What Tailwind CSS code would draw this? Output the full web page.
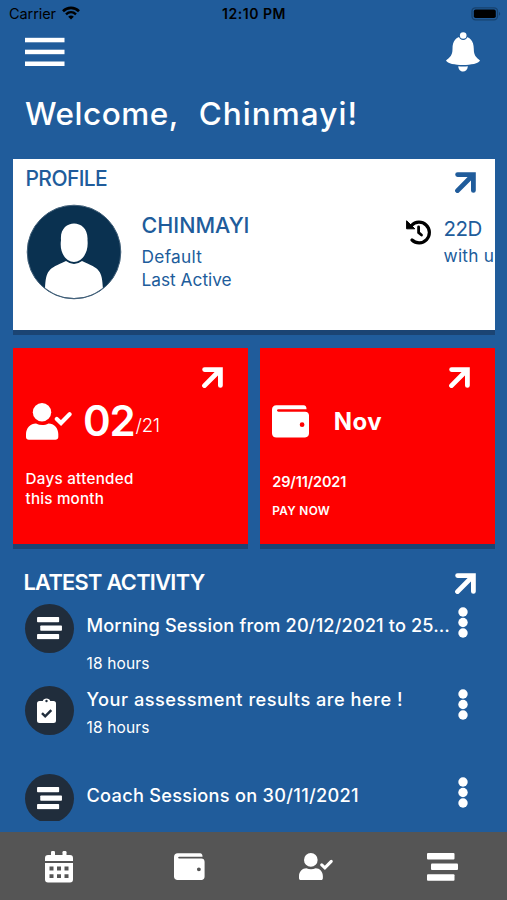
<!DOCTYPE html>
<html lang="en">
<head>
<meta charset="utf-8">
<title>Home</title>
<script src="https://cdn.jsdelivr.net/npm/@tailwindcss/browser@4"></script>
</head>
<body class="bg-[#205c9b]">
<svg class="hidden">
  <symbol id="arrow" viewBox="0 0 21 21"><path d="M2.6 2.6H18.4V18.4M18 3L2.5 18.6" fill="none" stroke="currentColor" stroke-width="4.8" stroke-linecap="round" stroke-linejoin="miter"/></symbol>
  <symbol id="usercheck" viewBox="0 0 46 37"><circle cx="16" cy="9.2" r="9.2" fill="currentColor"/><path d="M0 31C0 25 4.5 20.4 10 20.4C14 22.4 18.500 22.400 22.500 20.400C28 20.400 32.300 25 32.300 31V34C32.300 35.700 31 36.800 29.500 36.800H2.800C1.200 36.800 0 35.700 0 34Z" fill="currentColor"/><path d="M30.800 16L35 20L43.600 11.200" fill="none" stroke="currentColor" stroke-width="4.100" stroke-linecap="round"/></symbol>
  <symbol id="wallet" viewBox="0 0 38 33"><path fill-rule="evenodd" fill="currentColor" d="M4.500 0H32C34 0 35 1.500 35 4.200H6.500C4.600 4.200 4.600 6.500 6.500 6.500H33.500C36 6.500 37.500 8 37.500 10.500V28.500C37.500 31 36 32.700 33.500 32.700H4.500C1.700 32.700 0 31 0 28.300V4.500C0 1.700 1.700 0 4.500 0ZM30.500 17.300A2.400 2.400 0 1 0 30.500 22.100A2.400 2.400 0 1 0 30.500 17.300Z"/></symbol>
  <symbol id="stream" viewBox="0 0 31 28"><g fill="currentColor"><rect width="27.500" height="6.500" rx="1"/><rect x="4" y="10.600" width="27" height="6.500" rx="1"/><rect y="21.200" width="27.500" height="6.500" rx="1"/></g></symbol>
  <symbol id="dots" viewBox="0 0 10 31"><g fill="currentColor"><circle cx="5" cy="5" r="4.700"/><circle cx="5" cy="15.500" r="4.700"/><circle cx="5" cy="26" r="4.700"/></g></symbol>
</svg>
<div class="w-[507px] h-[900px] overflow-hidden flex flex-col bg-[#205c9b] font-['Inter',sans-serif] text-white whitespace-nowrap">
  <header class="h-7 shrink-0 grid grid-cols-3 items-center pl-[9px] pr-[6px] text-black">
    <div class="flex items-center gap-[6px]"><span class="text-[14.5px] leading-7 tracking-[-0.08px]">Carrier</span>
      <svg class="w-[18px] h-[14px] -mt-[2px]" viewBox="0 0 18 14" fill="none" stroke="#000"><path d="M1 5.200C5.500 .8 12.500 .8 17 5.200" stroke-width="2.600"/><path d="M4 8.400C7 5.600 11 5.600 14 8.400" stroke-width="2.400"/><path d="M9 13.600L6.200 10.700C7.800 9.200 10.200 9.200 11.800 10.700Z" fill="#000" stroke="none"/></svg></div>
    <span class="justify-self-center -ml-[2px] text-[14px] font-semibold leading-7 tracking-[0.55px]">12:10 PM</span>
    <svg class="justify-self-end w-[30px] h-[14px]" viewBox="0 0 30 14"><rect x="1" y=".8" width="25.500" height="12" rx="3.500" fill="none" stroke="#17426f" stroke-width="1.300"/><rect x="2.800" y="2.600" width="22" height="8.500" rx="1.800"/><path d="M28 5C29.500 5.300 29.500 8.300 28 8.600Z" fill="#17426f"/></svg>
  </header>
  <div class="h-[58px] shrink-0 flex justify-between pl-[25px] pr-[27px]">
    <svg class="w-10 h-[30px] mt-[9px]" viewBox="0 0 40 30" fill="#fff"><rect y=".8" width="39.500" height="4.500"/><rect y="12.700" width="39.500" height="4.500"/><rect y="24.500" width="39.500" height="4.500"/></svg>
    <svg class="w-[34px] h-[40px] mt-1" viewBox="0 0 34 40"><path d="M6.500 17C6.500 9 10 4.600 17 4.600S27.800 9 27.800 17C27.800 23.500 30 25 34 28.500C31.500 34.500 2.500 34.500 0 28.500C4 25 6.500 23.500 6.500 17Z" fill="#fff"/><circle cx="17.200" cy="3.800" r="4.300" fill="#205c9b"/><circle cx="17.200" cy="3.500" r="3.300" fill="#fff"/><path d="M12.300 34.300Q17 34.900 21.900 34.300C21.500 41.300 12.500 41.300 12.300 34.300Z" fill="#fff"/></svg>
  </div>
  <h1 class="h-[73px] shrink-0 pl-[25px] text-[31.5px] font-medium leading-[56px]"><span class="tracking-[0.5px]">Welcome,</span><span class="ml-[20px] tracking-[1.05px]">Chinmayi!</span></h1>
  <main class="flex-1 min-h-0 px-[13px] overflow-hidden">
    <section class="w-[481.5px] h-[171px] bg-white text-[#205c9b] shadow-[0_5px_0_#1b4473] overflow-hidden">
      <div class="flex justify-between pl-[12.5px] pr-[19px]"><h2 class="text-[21px] font-medium leading-[39px] tracking-[-0.6px]">PROFILE</h2><svg class="w-[21px] h-[21px] mt-[13px]"><use href="#arrow"/></svg></div>
      <div class="flex pl-[13px]">
        <svg class="w-[96px] h-[96px] mt-[6px] shrink-0" viewBox="0 0 96 96"><defs><clipPath id="c"><circle cx="48" cy="48" r="46"/></clipPath></defs><circle cx="48" cy="48" r="46.800" fill="#0a3150" stroke="#43617a"/><g clip-path="url(#c)"><path d="M35 36C33 14 63 14 61.500 36C63 50 55 58 48 58S33 50 35 36ZM19 85C20 66 22 65 40 57Q48 63 56 57C74 65 76 66 77 85C66 97 30 97 19 85Z" fill="#fff"/></g></svg>
        <div class="w-[284px] pl-[19.5px] pt-[14px] shrink-0 flex flex-col items-start">
          <b class="text-[21.5px] font-medium leading-[26px]">CHINMAYI</b>
          <span class="mt-[7px] text-[17.3px] leading-[23px] tracking-[0.3px]">Default</span>
          <span class="text-[17.3px] leading-[23px]">Last Active</span>
        </div>
        <svg class="w-[25px] h-[26px] mt-[21px] shrink-0" viewBox="0 0 25 26"><path d="M5.500 6.500A10.300 10.300 0 1 1 6 21" fill="none" stroke="#000" stroke-width="3.200" stroke-linecap="round"/><path d="M.6 1.800V9.800H8.800Z" stroke="#000" stroke-linejoin="round"/><path d="M12.600 8V13.500L15.500 16" fill="none" stroke="#000" stroke-width="2.800" stroke-linecap="round"/></svg>
        <div class="pl-[12.5px] pt-[18px] flex flex-col items-start"><span class="text-[20.5px] leading-[26px] tracking-[-0.5px]">22D</span><span class="mt-[2px] text-[17.3px] leading-[23px] tracking-[0.25px]">with us</span></div>
      </div>
    </section>
    <div class="mt-[18.4px] w-[481.5px] grid grid-cols-2 gap-[12px]">
      <section class="h-[196px] bg-[#fe0000] shadow-[0_5px_0_#1b4473] pl-[12.5px] flex flex-col items-start">
        <svg class="w-[21px] h-[21px] mt-[19px] self-end mr-[25px]"><use href="#arrow"/></svg>
        <div class="flex h-[48px] mt-[9px] items-center"><svg class="w-[46px] h-[37px] mt-[1px]"><use href="#usercheck"/></svg><b class="ml-[11.5px] text-[42px] font-semibold leading-[48px] tracking-[-1.2px]">02</b><span class="ml-[1px] mt-[8px] text-[18.5px] font-light tracking-[-0.3px]">/21</span></div>
        <span class="mt-[24px] text-[15.2px] font-medium leading-[20px] tracking-[0.28px]">Days attended</span><span class="text-[15.2px] font-medium leading-[20px] tracking-[0.2px]">this month</span>
      </section>
      <section class="h-[196px] bg-[#fe0000] shadow-[0_5px_0_#1b4473] pl-[12.5px] flex flex-col items-start">
        <svg class="w-[21px] h-[21px] mt-[19px] self-end mr-[25px]"><use href="#arrow"/></svg>
        <div class="flex h-[48px] mt-[9px] items-center"><svg class="w-[37.5px] h-[33px]"><use href="#wallet"/></svg><b class="ml-[24px] mt-[2px] text-[24px] font-bold tracking-[0.5px]">Nov</b></div>
        <span class="mt-[27px] text-[14.5px] font-semibold leading-[20px] tracking-[-0.13px]">29/11/2021</span><span class="mt-[9px] text-[11.8px] font-semibold leading-[20px] tracking-[0.34px]">PAY NOW</span>
      </section>
    </div>
    <div class="mt-[22.6px] flex justify-between pl-[10.5px] pr-[18px]"><h2 class="text-[21.8px] font-semibold leading-[30px] tracking-[-0.7px]">LATEST ACTIVITY</h2><svg class="w-[21px] h-[21px] mt-[6px]"><use href="#arrow"/></svg></div>
    <ul class="mt-[7.3px] pl-[12px]">
      <li class="h-[82px] flex items-start">
        <div class="w-[48.5px] h-[48.5px] rounded-full bg-[#202d3c] flex items-center justify-center"><svg class="w-[25px] h-[22.5px]"><use href="#stream"/></svg></div>
        <div class="pl-[13px] pt-[11px] w-[384.5px] flex flex-col items-start"><span class="text-[18.2px] font-medium leading-5 tracking-[0.13px]">Morning Session from 20/12/2021 to 25…</span><span class="mt-[19px] text-[15.5px] leading-5 tracking-[0.14px]">18 hours</span></div>
        <svg class="w-[10px] h-[31px] mt-[3px]"><use href="#dots"/></svg>
      </li>
      <li class="h-[88px] flex items-start">
        <div class="w-[48.5px] h-[48.5px] rounded-full bg-[#202d3c]"><svg class="ml-[12px] mt-[12px] w-[19px] h-[25px]" viewBox="0 0 19 25"><path fill="#fff" d="M2.500 3H5.800C6 -.5 13 -.5 13.200 3H16.500Q19 3 19 5.500V22.500Q19 25 16.500 25H2.500Q0 25 0 22.500V5.500Q0 3 2.500 3Z"/><circle cx="9.500" cy="3" r="1.200" fill="#202d3c"/><path d="M5 15.200L8.200 18.300L14.300 12.200" fill="none" stroke="#202d3c" stroke-width="2.500"/></svg></div>
        <div class="pl-[13px] pt-[3px] w-[384.5px] flex flex-col items-start"><span class="text-[18.2px] font-medium leading-5 tracking-[0.5px]">Your assessment results are here !</span><span class="mt-[9px] text-[15.5px] leading-5 tracking-[0.14px]">18 hours</span></div>
        <svg class="w-[10px] h-[31px] mt-[3px]"><use href="#dots"/></svg>
      </li>
      <li class="h-[46.5px] flex items-start overflow-hidden">
        <div class="w-[48.5px] h-[48.5px] rounded-full bg-[#202d3c] flex items-center justify-center shrink-0"><svg class="w-[25px] h-[22.5px]"><use href="#stream"/></svg></div>
        <div class="pl-[13px] pt-[11px] w-[384.5px] flex flex-col items-start"><span class="text-[18.2px] font-medium leading-5 tracking-[0.28px]">Coach Sessions on 30/11/2021</span></div>
        <svg class="w-[10px] h-[31px] mt-[3px]"><use href="#dots"/></svg>
      </li>
    </ul>
  </main>
  <nav class="h-[68px] shrink-0 bg-[#555555] flex items-center justify-between pl-[45px] pr-[49px] pt-[1px]">
    <svg class="w-[28px] h-[32px]" viewBox="0 0 28 32"><g fill="#fff"><rect x="6" width="4" height="7" rx="1.200"/><rect x="17.500" width="4" height="7" rx="1.200"/><path d="M3 4H25Q28 4 28 7V10H0V7Q0 4 3 4ZM0 12H28V28.500Q28 31.500 25 31.500H3Q0 31.500 0 28.500Z"/></g><path d="M4.500 17.500h4M12 17.500h4M19.500 17.500h4M4.500 25.200h4M12 25.200h4M19.500 25.200h4" stroke="#555" stroke-width="3.800"/></svg>
    <svg class="w-[31px] h-[27.5px] ml-[7px]"><use href="#wallet"/></svg>
    <svg class="w-[34px] h-[27.5px]"><use href="#usercheck"/></svg>
    <svg class="w-[31px] h-[28px]"><use href="#stream"/></svg>
  </nav>
</div>
</body>
</html>
